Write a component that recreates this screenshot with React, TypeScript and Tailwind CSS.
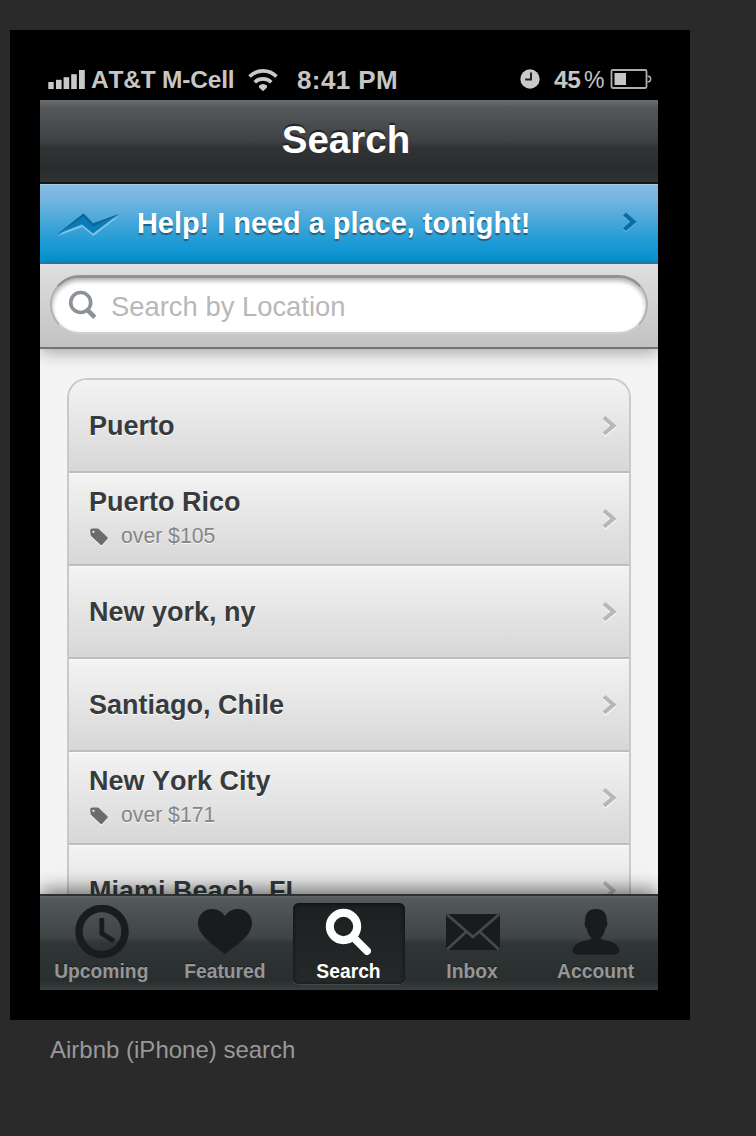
import type { ReactNode } from "react";

type Place = { name: string; price?: string };

const places: Place[] = [
  { name: "Puerto" },
  { name: "Puerto Rico", price: "over $105" },
  { name: "New york, ny" },
  { name: "Santiago, Chile" },
  { name: "New York City", price: "over $171" },
  { name: "Miami Beach, FL" },
];

function StatusBar() {
  return (
    <div className="flex h-10 shrink-0 items-center bg-black pl-2 text-[24.5px] leading-10 font-bold whitespace-nowrap text-[#c6c6c6]">
      <svg className="w-[38px] shrink-0" width="38" height="20" viewBox="0 0 38 20" fill="#c9c9c9">
        <rect x="0.3" y="12" width="5.4" height="7" />
        <rect x="8" y="9.8" width="5.6" height="9.2" />
        <rect x="15.6" y="7.2" width="5.6" height="11.8" />
        <rect x="23.2" y="4.2" width="5.6" height="14.8" />
        <rect x="31" y="0" width="5.8" height="19" />
      </svg>
      <span className="ml-[5px] w-[157px] shrink-0 tracking-[-0.2px]">AT&amp;T M-Cell</span>
      <svg className="shrink-0" width="30" height="24" viewBox="0 0 30 24" fill="none" stroke="#c9c9c9" strokeWidth="3.6">
        <path d="M1.500 8.600C9 1 21 1 28.500 8.600" />
        <path d="M6.700 14.200C11 9.800 19 9.800 23.300 14.200" />
        <path d="M11 17.500c2.600-2 5.400-2 8 0v2L15 23.200L11 19.500z" fill="#c9c9c9" stroke="none" />
      </svg>
      <span className="ml-[19px] w-[223px] shrink-0 text-[26px] tracking-[0.4px]">8:41 PM</span>
      <svg className="mt-[-2px] shrink-0" width="20" height="20" viewBox="0 0 20 20">
        <circle cx="10" cy="10" r="9.7" fill="#c9c9c9" />
        <path d="M11 3.600V10.500H5.200" fill="none" stroke="#222" strokeWidth="2" />
      </svg>
      <span className="ml-[14px] w-[30px] shrink-0 tracking-[-0.5px]">45</span>
      <span className="w-[26px] shrink-0 text-[23px] font-normal">%</span>
      <svg className="mt-[-2px] shrink-0" width="42" height="20" viewBox="0 0 42 20">
        <rect x="1.5" y="1" width="35" height="18" rx="1.200" fill="none" stroke="#adadad" strokeWidth="1.800" />
        <path d="M37.500 7.400c4.200-1.200 4.200 6.400 0 5.200" fill="none" stroke="#adadad" strokeWidth="1.600" />
        <rect x="4.5" y="4" width="11.500" height="12" fill="#c6c6c6" />
      </svg>
    </div>
  );
}

function TagIcon() {
  return (
    <svg width="20" height="19" viewBox="0 0 20 19" className="mt-[3px] drop-shadow-[0_1px_0_#f5f5f5]">
      <path
        fillRule="evenodd"
        fill="#6b6b6b"
        d="M3.500 .6L8 .4c.8 0 1.400.2 2 .8L18.200 9c.8.8.8 1.500 0 2.200l-4.800 5.200c-.7.7-1.400.7-2.200 0L2.600 8.600C2 8 1.700 7.500 1.600 6.700L1.200 3C1.100 1.500 2 .7 3.500.6zM4.500 2.800a1.100 1.100 0 1 0 0 2.200 1.100 1.100 0 0 0 0-2.200z"
      />
    </svg>
  );
}

function RowChevron() {
  return (
    <svg width="16" height="22" viewBox="0 0 16 22" fill="none" strokeWidth="4">
      <path d="M2 3.200L11.500 11.500L2 19.800" stroke="#f4f4f4" transform="translate(0 .8)" />
      <path d="M2 2.600L11.500 10.700L2 18.800" stroke="#b7b7b9" />
    </svg>
  );
}

function PlaceRow({ place, first }: { place: Place; first: boolean }) {
  return (
    <div
      className={
        (first ? "h-[93px] rounded-t-[18px] " : "h-[93px] shadow-[inset_0_1px_0_#fbfbfb] ") +
        "flex shrink-0 items-center justify-between border-b-2 border-[#bdbdbd] bg-[linear-gradient(#f3f3f3,#d7d7d7)] pt-px pr-[11px] pl-5"
      }
    >
      <div className="whitespace-nowrap">
        <div className="text-[27px] leading-[34px] font-bold text-[#373b3d] [text-shadow:0_1px_0_#fff]">{place.name}</div>
        {place.price && (
          <div className="flex items-center gap-3 text-[21.2px] leading-[34px] text-[#858585] [text-shadow:0_1px_0_#f8f8f8]">
            <TagIcon />
            <span>{place.price}</span>
          </div>
        )}
      </div>
      <RowChevron />
    </div>
  );
}

function Tab({ label, active, children }: { label: string; active?: boolean; children: ReactNode }) {
  return (
    <div className="flex flex-1 justify-center pt-[7px]">
      <div
        className={
          active
            ? "flex h-[81px] w-[112px] flex-col items-center rounded-[6px] bg-linear-to-b from-[#1c2021] to-[#25292a] text-white shadow-[inset_0_1px_4px_#0c0e0f,0_1px_0_#454a4b]"
            : "flex h-[81px] w-[112px] flex-col items-center text-[#959697]"
        }
      >
        <div className="flex h-[57px] items-center justify-center">{children}</div>
        <div className="pt-px pr-px text-[19.3px] leading-[22px] font-bold whitespace-nowrap [text-shadow:0_-1px_0_#1c1f20]">{label}</div>
      </div>
    </div>
  );
}

function TabBar() {
  return (
    <div className="relative z-10 flex h-[96px] shrink-0 border-t-2 border-[#2b3030] bg-[linear-gradient(#5f6466_0,#53585a_3px,#3f4446_44%,#303535_50%,#292e2e_90%,#393e3f_100%)] shadow-[0_-4px_18px_rgba(0,0,0,0.55)]">
      <Tab label="Upcoming">
        <svg width="54" height="54" viewBox="0 0 54 54" fill="none" stroke="#1a1b1c">
          <circle cx="27" cy="26.5" r="23" strokeWidth="7.4" />
          <path d="M26.800 13v15.500l12 7.600" strokeWidth="4.800" />
        </svg>
      </Tab>
      <Tab label="Featured">
        <svg width="54" height="50" viewBox="0 0 54 50" fill="#1a1b1c">
          <path d="M27 47.500C22.500 42.500 10 36 3.500 26.500C1 22.500 0 19.500 0 16C0 8 6.500 2 14 2c5.500 0 10 2.500 13 7C30 4.500 34.500 2 40 2c7.500 0 14 6 14 14c0 3.500-1 6.500-3.500 10.500C44 36 31.500 42.500 27 47.500z" />
        </svg>
      </Tab>
      <Tab label="Search" active>
        <svg width="48" height="50" viewBox="0 0 48 50" fill="none" stroke="#fff">
          <circle cx="18.5" cy="19.500" r="13.700" strokeWidth="8" />
          <path d="M28.500 30.500L42 44" strokeWidth="7.800" strokeLinecap="round" />
        </svg>
      </Tab>
      <Tab label="Inbox">
        <svg width="54" height="36" viewBox="0 0 54 36">
          <rect width="54" height="36" rx="1" fill="#1a1b1c" />
          <path d="M1 .5L27 23L53 .5M1 35.500L20.500 17.500M53 35.500L33.500 17.500" fill="none" stroke="#45494b" strokeWidth="2.800" />
        </svg>
      </Tab>
      <Tab label="Account">
        <svg width="48" height="50" viewBox="0 0 48 50" fill="#1a1b1c">
          <path d="M24 2c7.500 0 11.300 4.500 10.800 12.500c1.200 2.200.5 5.500-1.300 6.500c-.8 4.500-2.500 7.500-4.800 10c0 1 1.300 1.500 3.300 1.900C41 34.500 47 38 47.300 43c0 2.800-1.500 4.500-4.300 4.500H5C2.200 47.500.7 45.800.7 43C1 38 7 34.500 16 32.900c2-.4 3.300-.9 3.300-1.900c-2.300-2.500-4-5.500-4.800-10c-1.800-1-2.500-4.300-1.300-6.500C12.700 6.500 16.500 2 24 2z" />
        </svg>
      </Tab>
    </div>
  );
}

export default function App() {
  return (
    <div className="flex h-[1136px] w-[756px] flex-col overflow-hidden bg-[#2a2a2a] pt-[30px] pl-[10px] font-['Liberation_Sans',Arial,sans-serif] [font-kerning:none]">
      <div className="flex h-[990px] w-[680px] shrink-0 bg-black pt-[30px] pr-8 pb-[30px] pl-[30px]">
        <div className="flex h-[930px] w-[618px] flex-col overflow-hidden bg-[#f4f4f4]">
          <StatusBar />
          <div className="flex h-[84px] shrink-0 items-center justify-center border-b-2 border-[#141617] bg-[linear-gradient(#6a6e71_0,#55595c_7px,#3e4244_50%,#303434_58%,#292d2d_85%,#303334_100%)] pb-[2px] pr-[6px]">
            <h1 className="text-[38.5px] leading-[46px] font-bold text-white [text-shadow:0_-2px_1px_#222]">Search</h1>
          </div>
          <div className="flex h-20 shrink-0 items-center border-t border-b-2 border-t-[#a5cce6] border-b-[#2384bb] bg-[linear-gradient(#84bbe4_0,#7ab7e1_15%,#42a6d9_50%,#1a99d4_78%,#0695d3_100%)] pr-[19px] pb-[2px] pl-4">
            <svg width="64" height="28" viewBox="0 0 64 28">
              <path d="M1.500 25.500L27.500 5L37 15L63 5.500L37 25.500L26 16.500z" fill="#83bfe2" transform="translate(.5 1.500)" />
              <path d="M1.500 25L27.500 4.500L37 14.500L63 5L37 24.500L26 15.500z" fill="#0b7cba" />
              <path d="M1.500 25L27.500 4.500L37 14.500L63 5L37 17.500L27.500 7.500z" fill="#14638f" />
            </svg>
            <span className="ml-[17px] flex-1 text-[28.9px] leading-9 font-bold whitespace-nowrap text-white [text-shadow:0_2px_1px_#275f7d]">
              Help! I need a place, tonight!
            </span>
            <svg className="mt-[-1px]" width="18" height="24" viewBox="0 0 18 24" fill="none" strokeWidth="4.200">
              <path d="M3.500 5.500L12.500 13.300L3.500 21" stroke="#5db4de" />
              <path d="M3.500 4L12.500 11.800L3.500 19.500" stroke="#0b6da5" />
            </svg>
          </div>
          <div className="relative z-10 flex h-[85px] shrink-0 border-b-2 border-[#737373] bg-[linear-gradient(#dfdfdf,#c2c2c2)] px-[10px] pt-[11px] shadow-[0_3px_16px_rgba(0,0,0,0.35)]">
            <div className="flex h-[59px] w-full items-center rounded-full border-2 border-t-[3px] border-[#b0b0b0] border-t-[#929292] border-b-[#cfcfcf] bg-white pl-4 shadow-[inset_0_3px_4px_rgba(0,0,0,0.3)]">
              <svg width="30" height="32" viewBox="0 0 30 32" fill="none" stroke="#8b9298">
                <circle cx="12.700" cy="13.500" r="10" strokeWidth="3.600" />
                <path d="M19.500 21L26.800 28.300" strokeWidth="4.600" />
              </svg>
              <span className="ml-[13px] pt-[3px] text-[27.4px] leading-9 text-[#b8b8b8]">Search by Location</span>
            </div>
          </div>
          <div className="flex min-h-0 flex-1 flex-col overflow-hidden px-[27px] pt-[29px]">
            <div className="flex shrink-0 flex-col rounded-t-[20px] border-2 border-b-0 border-[#c9c9c9]">
              {places.map((place, i) => (
                <PlaceRow key={place.name} place={place} first={i === 0} />
              ))}
            </div>
          </div>
          <TabBar />
        </div>
      </div>
      <p className="pt-[15px] pl-10 text-2xl leading-[30px] text-[#999]">Airbnb (iPhone) search</p>
    </div>
  );
}
